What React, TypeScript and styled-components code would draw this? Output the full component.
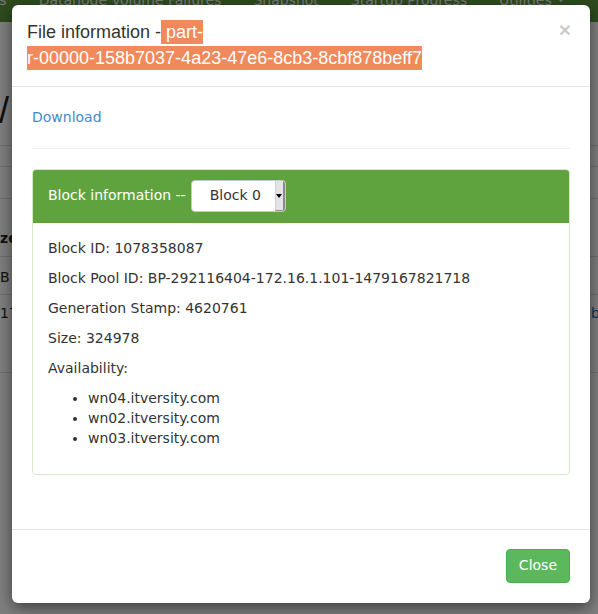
import React from 'react';
import styled, { createGlobalStyle } from 'styled-components';

const GlobalStyle = createGlobalStyle`
  html, body { margin: 0; padding: 0; }
  body {
    width: 598px;
    height: 614px;
    overflow: hidden;
    background: #fff;
    font-family: "DejaVu Sans", sans-serif;
    font-size: 14px;
    line-height: 1.42857;
    color: #333;
  }
  * { box-sizing: border-box; }
`;

const Page = styled.div`
  position: relative;
  width: 598px;
  height: 614px;
  overflow: hidden;
`;

/* ---------- underlying page (dimmed) ---------- */
const Navbar = styled.div`
  height: 22px;
  background: #5a963a;
  overflow: hidden;
`;

const NavList = styled.ul`
  display: flex;
  list-style: none;
  margin: -10px 0 0 -85px;
  padding: 0;
`;

const NavItem = styled.li`
  padding: 0 16px;
  line-height: 20px;
  color: #f2f2f2;
  white-space: nowrap;
  display: flex;
  align-items: center;
`;

const Caret = styled.span`
  display: inline-block;
  margin-left: 5px;
  border-left: 4px solid transparent;
  border-right: 4px solid transparent;
  border-top: 4px solid #f2f2f2;
`;

const PageHeading = styled.div`
  height: 123px;
  padding-top: 69px;
  font-family: "Liberation Sans", Arial, sans-serif;
  font-size: 36px;
  line-height: 1.1;
  color: #222;
  margin-left: -1px;
`;

const TableRow = styled.div<{ $h: number; $pt: number; $bold?: boolean }>`
  display: flex;
  height: ${(p) => p.$h}px;
  padding-top: ${(p) => p.$pt}px;
  border-top: 1px solid #dcdcdc;
  line-height: 20px;
  color: #222;
  font-weight: ${(p) => (p.$bold ? 700 : 400)};
  white-space: nowrap;
`;

const LeftCell = styled.span`
  flex: 1;
`;

const RightCell = styled.span`
  width: 7px;
  overflow: hidden;
  color: #2a6496;
`;

const Backdrop = styled.div`
  position: absolute;
  inset: 0;
  background: rgba(0, 0, 0, 0.5);
`;

/* ---------- modal ---------- */
const Modal = styled.div`
  position: absolute;
  top: 5px;
  left: 12px;
  width: 578px;
  background: #fff;
  border-radius: 6px;
  box-shadow: 0 5px 15px rgba(0, 0, 0, 0.5);
  background-clip: padding-box;
`;

const ModalHeader = styled.div`
  padding: 15px;
  border-bottom: 1px solid #e5e5e5;
  &::after { content: ''; display: block; clear: both; }
`;

const CloseX = styled.button`
  float: right;
  margin: -1px 4px 0 0;
  padding: 0;
  border: 0;
  background: transparent;
  font-family: "Liberation Sans", Arial, sans-serif;
  font-size: 21px;
  font-weight: 700;
  line-height: 1;
  color: #000;
  opacity: 0.2;
  cursor: pointer;
`;

const Title = styled.h4`
  margin: 0;
  font-family: "Liberation Sans", Arial, sans-serif;
  font-size: 18px;
  font-weight: 500;
  line-height: 1.42857;
  color: #333;
`;

const Highlight = styled.span`
  background: #f0895c;
  color: #fff;
  padding: 2px 0;
  -webkit-box-decoration-break: clone;
  box-decoration-break: clone;
`;

const NoWrap = styled.span`
  white-space: nowrap;
`;

const ModalBody = styled.div`
  padding: 21px 20px 20px;
`;

const Link = styled.a`
  color: #428bca;
  text-decoration: none;
`;

const Rule = styled.hr`
  margin: 20px 0;
  border: 0;
  border-top: 1px solid #eee;
`;

const Panel = styled.div`
  margin-bottom: 34px;
  border: 1px solid #d6e9c6;
  border-radius: 4px;
  background: #fff;
`;

const PanelHeading = styled.div`
  display: flex;
  align-items: center;
  padding: 10px 15px;
  background: #5fa33e;
  border-bottom: 1px solid #5fa33e;
  border-radius: 3px 3px 0 0;
  color: #fff;
`;

const SelectBox = styled.div`
  display: flex;
  width: 95px;
  height: 32px;
  margin-left: 5px;
  background: #fff;
  border: 1px solid #c8c8c8;
  border-radius: 4px;
  overflow: hidden;
  color: #333;
`;

const SelectLabel = styled.span`
  flex: 1;
  display: flex;
  align-items: center;
  padding-left: 18px;
`;

const SelectArrow = styled.span`
  width: 10px;
  display: flex;
  align-items: center;
  justify-content: center;
  background: #e4e4e4;
  border-left: 1px solid #d0d0d0;
  border-right: 2px solid #8c8c8c;
  border-bottom: 1px solid #8c8c8c;
  &::after {
    content: '';
    border-left: 3px solid transparent;
    border-right: 3px solid transparent;
    border-top: 4px solid #000;
  }
`;

const PanelBody = styled.div`
  padding: 16px 15px 15px;
`;

const Para = styled.p`
  margin: 0 0 10px;
`;

const HostList = styled.ul`
  margin: 0 0 10px;
  padding-left: 40px;
`;

const ModalFooter = styled.div`
  display: flex;
  justify-content: flex-end;
  padding: 19px 20px 20px;
  border-top: 1px solid #e5e5e5;
`;

const Button = styled.button`
  padding: 6px 12px;
  font-family: "DejaVu Sans", sans-serif;
  font-size: 14px;
  line-height: 1.42857;
  color: #fff;
  background: #5cb85c;
  border: 1px solid #4cae4c;
  border-radius: 4px;
  cursor: pointer;
`;

const navItems = ['Datanodes', 'Datanode Volume Failures', 'Snapshot', 'Startup Progress'];
const hosts = ['wn04.itversity.com', 'wn02.itversity.com', 'wn03.itversity.com'];

export default function App() {
  return (
    <Page>
      <GlobalStyle />
      <Navbar>
        <NavList>
          {navItems.map((n) => (
            <NavItem key={n}>{n}</NavItem>
          ))}
          <NavItem>
            Utilities
            <Caret />
          </NavItem>
        </NavList>
      </Navbar>
      <PageHeading>/</PageHeading>
      <TableRow $h={21} $pt={0} />
      <TableRow $h={32} $pt={0} />
      <TableRow $h={58} $pt={29} $bold>
        <LeftCell>ze</LeftCell>
      </TableRow>
      <TableRow $h={38} $pt={10}>
        <LeftCell>B</LeftCell>
      </TableRow>
      <TableRow $h={78} $pt={8}>
        <LeftCell>17</LeftCell>
        <RightCell>bde</RightCell>
      </TableRow>
      <TableRow $h={100} $pt={0} />
      <Backdrop />
      <Modal>
        <ModalHeader>
          <CloseX aria-label="Close">×</CloseX>
          <Title>
            File information -
            <Highlight>
              {' part-'}
              <NoWrap>r-00000-158b7037-4a23-47e6-8cb3-8cbf878beff7</NoWrap>
            </Highlight>
          </Title>
        </ModalHeader>
        <ModalBody>
          <div>
            <Link href="#">Download</Link>
          </div>
          <Rule />
          <Panel>
            <PanelHeading>
              Block information --
              <SelectBox>
                <SelectLabel>Block 0</SelectLabel>
                <SelectArrow />
              </SelectBox>
            </PanelHeading>
            <PanelBody>
              <Para>Block ID: 1078358087</Para>
              <Para>Block Pool ID: BP-292116404-172.16.1.101-1479167821718</Para>
              <Para>Generation Stamp: 4620761</Para>
              <Para>Size: 324978</Para>
              <Para>Availability:</Para>
              <HostList>
                {hosts.map((h) => (
                  <li key={h}>{h}</li>
                ))}
              </HostList>
            </PanelBody>
          </Panel>
        </ModalBody>
        <ModalFooter>
          <Button>Close</Button>
        </ModalFooter>
      </Modal>
    </Page>
  );
}
